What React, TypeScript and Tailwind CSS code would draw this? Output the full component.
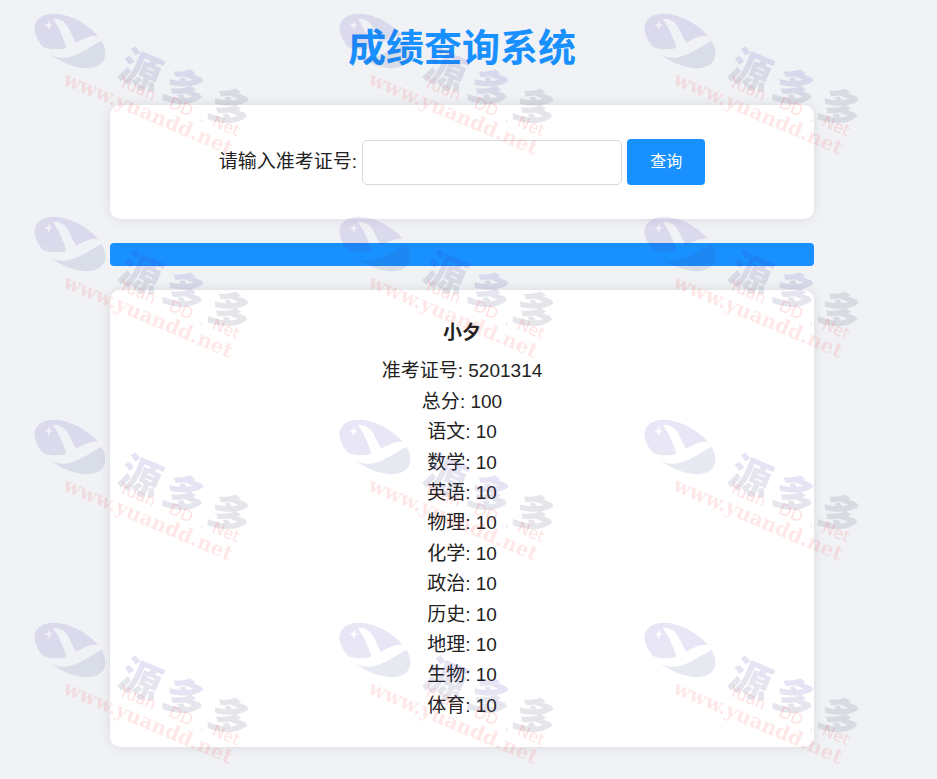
import { useState } from "react";

const scores = [
  ["准考证号", "5201314"],
  ["总分", "100"],
  ["语文", "10"],
  ["数学", "10"],
  ["英语", "10"],
  ["物理", "10"],
  ["化学", "10"],
  ["政治", "10"],
  ["历史", "10"],
  ["地理", "10"],
  ["生物", "10"],
  ["体育", "10"],
];

function Mark() {
  return (
    <svg width="305" height="203" viewBox="0 0 305 203" className="block overflow-visible">
      <defs>
        <linearGradient id="globe" gradientUnits="userSpaceOnUse" x1="63" y1="29" x2="77" y2="53">
          <stop offset="0.5" stopColor="#4b2fb8" />
          <stop offset="0.8" stopColor="#3a4f90" />
        </linearGradient>
        <linearGradient id="brand" x1="0.4" y1="0" x2="0.6" y2="1">
          <stop offset="0.3" stopColor="#4b2fb8" />
          <stop offset="0.7" stopColor="#3c4078" />
        </linearGradient>
        <mask id="letter" maskUnits="userSpaceOnUse" x="30" y="8" width="82" height="68">
          <rect x="30" y="8" width="82" height="68" fill="#fff" />
          <path
            fill="#000"
            d="M37 43C44 49 52 50 60 49C64 49 67 48 66 46C64 40 61 33 58 27L53 19C59 18 65 22 68 27L76 43C83 39 90 35 98 36L105 39C97 43 88 49 80 53C72 57 64 59 57 57C50 55 43 51 37 43Z"
          />
          <path fill="#000" d="M49 20l1 4 3 1-3 1-1 4-2-4-3-1 4-1z" />
        </mask>
      </defs>
      <g mask="url(#letter)">
        <ellipse cx="70" cy="41" rx="39" ry="22" transform="rotate(30 70 41)" fill="url(#globe)" opacity="0.12" />
      </g>
      <g
        transform="translate(135 84) rotate(23)"
        textAnchor="middle"
        opacity="0.13"
        className="font-['Noto_Sans_CJK_SC',sans-serif] text-[41px] font-black"
      >
        <text x="0" fill="url(#brand)">源</text>
        <text x="48" fill="url(#brand)">多</text>
        <text x="97" fill="#4a4a68">多</text>
      </g>
      <g
        transform="translate(118 86) rotate(23)"
        fill="#ff3030"
        opacity="0.14"
        className="font-['DejaVu_Sans',sans-serif] text-[16px]"
      >
        <text x="0">Yuan</text>
        <text x="54">DD</text>
        <text x="88">.</text>
        <text x="101">Net</text>
      </g>
      <g transform="translate(62 84) rotate(23)">
        <text fill="#ff2020" opacity="0.1" className="font-['DejaVu_Serif',serif] text-[20px] font-bold">
          www.yuandd.net
        </text>
      </g>
    </svg>
  );
}

function Watermark() {
  return (
    <div aria-hidden="true" className="pointer-events-none absolute inset-0 overflow-hidden">
      <div className="grid w-max grid-cols-3">
        {Array.from({ length: 12 }, (_, i) => (
          <Mark key={i} />
        ))}
      </div>
    </div>
  );
}

export default function App() {
  const [ticket, setTicket] = useState("");
  const card = "rounded-[10px] bg-white shadow-[0_0_12px_rgba(0,0,0,0.1)]";
  return (
    <div className="relative min-h-screen bg-[#f0f2f5] pr-[13px] pb-8 font-['Liberation_Sans','Noto_Sans_CJK_SC',sans-serif] text-[19px] leading-[1.6] text-[#222]">
      <main className="mx-auto flex w-full max-w-[704px] flex-col gap-6 pt-5">
        <h1 className="mb-1 text-center text-[38px] leading-[57px] font-bold text-[#1890ff]">成绩查询系统</h1>
        <form
          className={`${card} flex flex-wrap items-center justify-center gap-[5px] px-6 py-[34px]`}
          onSubmit={(e) => e.preventDefault()}
        >
          <label htmlFor="ticket">请输入准考证号:</label>
          <input
            id="ticket"
            type="text"
            value={ticket}
            onChange={(e) => setTicket(e.target.value)}
            className="h-[45px] w-[260px] rounded-[5px] border border-[#d9d9e0] bg-white px-3 outline-none"
          />
          <button type="submit" className="h-[46px] w-[78px] rounded-[4px] bg-[#1890ff] text-[16px] text-white">
            查询
          </button>
        </form>
        <div className="h-[23px] rounded-[4px] bg-[#1890ff]" />
        <section className={`${card} px-6 pt-7 pb-[26px] text-center`}>
          <h2 className="mb-2 font-bold">小夕</h2>
          {scores.map(([name, value]) => (
            <p key={name}>
              {name}: {value}
            </p>
          ))}
        </section>
      </main>
      <Watermark />
    </div>
  );
}
